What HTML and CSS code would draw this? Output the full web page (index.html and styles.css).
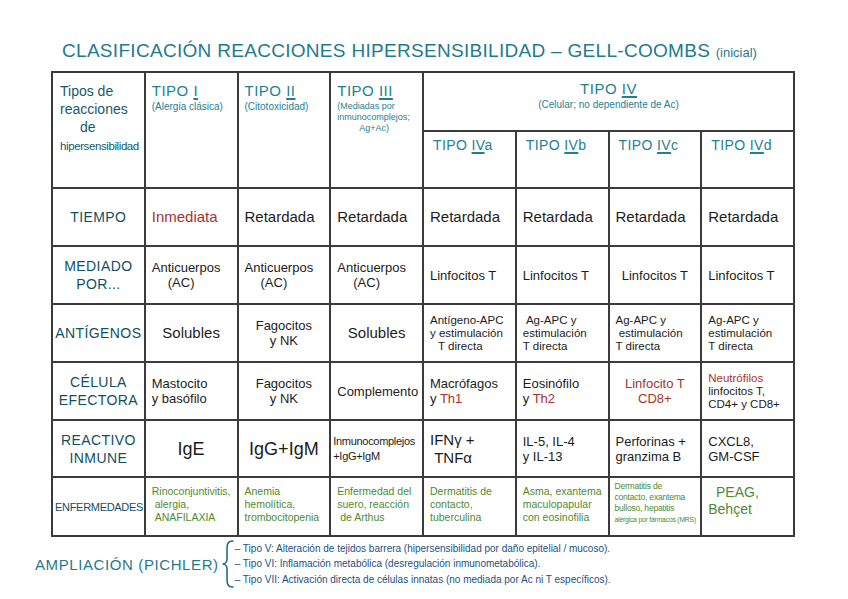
FILE: index.html
```html
<!DOCTYPE html>
<html lang="es">
<head>
<meta charset="utf-8">
<title>Clasificación reacciones hipersensibilidad</title>
<link rel="stylesheet" href="styles.css">
</head>
<body>
<div class="page">
  <h1 class="title">CLASIFICACIÓN REACCIONES HIPERSENSIBILIDAD – GELL-COOMBS <span class="title-small">(inicial)</span></h1>
  <table class="hs">
    <colgroup>
      <col><col><col><col><col><col><col><col>
    </colgroup>
    <tr class="r-h1">
      <th rowspan="2" class="corner">Tipos de<br>reacciones<br><span class="de">de</span><br><span class="long">hipersensibilidad</span></th>
      <th rowspan="2" class="th-type"><div class="tname">TIPO <span class="rn">I</span></div><div class="tsub">(Alergia clásica)</div></th>
      <th rowspan="2" class="th-type"><div class="tname">TIPO <span class="rn">II</span></div><div class="tsub">(Citotoxicidad)</div></th>
      <th rowspan="2" class="th-type"><div class="tname">TIPO <span class="rn">III</span></div><div class="tsub sm">(Mediadas por<br>inmunocomplejos;<br><span class="ind">Ag+Ac)</span></div></th>
      <th colspan="4" class="th-iv"><div class="tname">TIPO <span class="rn">IV</span></div><div class="tsub">(Celular; no dependiente de Ac)</div></th>
    </tr>
    <tr class="r-h2">
      <th class="th-sub">TIPO <span class="rn">IV</span>a</th>
      <th class="th-sub">TIPO <span class="rn">IV</span>b</th>
      <th class="th-sub">TIPO <span class="rn">IV</span>c</th>
      <th class="th-sub">TIPO <span class="rn">IV</span>d</th>
    </tr>
    <tr class="r58">
      <th class="lbl">TIEMPO</th>
      <td class="red">Inmediata</td>
      <td>Retardada</td>
      <td>Retardada</td>
      <td>Retardada</td>
      <td>Retardada</td>
      <td>Retardada</td>
      <td>Retardada</td>
    </tr>
    <tr class="r58">
      <th class="lbl">MEDIADO<br>POR...</th>
      <td class="md">Anticuerpos<br><span class="ind2">(AC)</span></td>
      <td class="md">Anticuerpos<br><span class="ind2">(AC)</span></td>
      <td class="md">Anticuerpos<br><span class="ind2">(AC)</span></td>
      <td class="md">Linfocitos T</td>
      <td class="md">Linfocitos T</td>
      <td class="md c">Linfocitos T</td>
      <td class="md">Linfocitos T</td>
    </tr>
    <tr class="r58">
      <th class="lbl">ANTÍGENOS</th>
      <td class="c">Solubles</td>
      <td class="md c">Fagocitos<br>y NK</td>
      <td class="c">Solubles</td>
      <td class="sm">Antígeno-APC<br>y estimulación<br><span class="ind3">T directa</span></td>
      <td class="sm">&nbsp;Ag-APC y<br>estimulación<br>T directa</td>
      <td class="sm">Ag-APC y<br>&nbsp;estimulación<br>T directa</td>
      <td class="sm">Ag-APC y<br>estimulación<br>T directa</td>
    </tr>
    <tr class="r58">
      <th class="lbl">CÉLULA<br>EFECTORA</th>
      <td class="md">Mastocito<br>y basófilo</td>
      <td class="md c">Fagocitos<br>y NK</td>
      <td class="md c">Complemento</td>
      <td class="md">Macrófagos<br>y <span class="red">Th1</span></td>
      <td class="md">Eosinófilo<br>y <span class="red">Th2</span></td>
      <td class="md red c">Linfocito T<br>CD8+</td>
      <td class="sm"><span class="red">Neutrófilos</span><br>linfocitos T,<br>CD4+ y CD8+</td>
    </tr>
    <tr class="r57">
      <th class="lbl">REACTIVO<br>INMUNE</th>
      <td class="lg c">IgE</td>
      <td class="lg c">IgG+IgM</td>
      <td class="md tight">Inmunocomplejos<br>+IgG+IgM</td>
      <td class="lg2">IFNγ +<br>&nbsp;TNFα</td>
      <td class="md">IL-5, IL-4<br>y IL-13</td>
      <td class="md">Perforinas +<br>granzima B</td>
      <td class="md">CXCL8,<br>GM-CSF</td>
    </tr>
    <tr class="r59">
      <th class="lbl lbl-sm">ENFERMEDADES</th>
      <td class="gr">Rinoconjuntivitis,<br>&nbsp;alergia,<br>&nbsp;ANAFILAXIA</td>
      <td class="gr">Anemia<br>hemolítica,<br>trombocitopenia</td>
      <td class="gr">Enfermedad del<br>suero, reacción<br>&nbsp;de Arthus</td>
      <td class="gr">Dermatitis de<br>contacto,<br>tuberculina</td>
      <td class="gr">Asma, exantema<br>maculopapular<br>con eosinofilia</td>
      <td class="gr xs">Dermatitis de<br>contacto, exantema<br>bulloso, hepatitis<br><span class="tiny">alérgica por fármacos (MRS)</span></td>
      <td class="gr big">&nbsp;&nbsp;PEAG,<br>Behçet</td>
    </tr>
  </table>
  <div class="footer">
    <div class="amp">AMPLIACIÓN (PICHLER)</div>
    <svg class="brace" width="14" height="50" viewBox="0 0 14 50" aria-hidden="true">
      <path d="M12 2 C6 2 6 6 6 12 L6 20 C6 23 4 25 1.5 25 C4 25 6 27 6 30 L6 38 C6 44 6 48 12 48" fill="none" stroke="#1f6f86" stroke-width="1.6" stroke-linecap="round"/>
    </svg>
    <ul class="amp-list">
      <li>– Tipo V: Alteración de tejidos barrera (hipersensibilidad por daño epitelial / mucoso).</li>
      <li>– Tipo VI: Inflamación metabólica (desregulación inmunometabólica).</li>
      <li>– Tipo VII: Activación directa de células innatas (no mediada por Ac ni T específicos).</li>
    </ul>
  </div>
</div>
</body>
</html>
```

FILE: styles.css
```css
* { box-sizing: border-box; }
html, body { margin: 0; padding: 0; background: #ffffff; }
body {
  font-family: "Liberation Sans", "DejaVu Sans", sans-serif;
  color: #1c1c1c;
  width: 848px;
  height: 599px;
  overflow: hidden;
}
.page { padding: 0; }

.title {
  margin: 37px 0 4px 62px;
  font-size: 19px;
  line-height: 28px;
  font-weight: normal;
  color: #1f7a8e;
  letter-spacing: 0.3px;
  white-space: nowrap;
}
.title-small { font-size: 13px; letter-spacing: 0; }

.hs {
  margin-left: 51px;
  width: 744px;
  border-collapse: collapse;
  table-layout: fixed;
}
.hs th, .hs td {
  border: 2px solid #3b3b3b;
  padding: 0 6px;
  font-weight: normal;
  text-align: left;
  vertical-align: middle;
  font-size: 14px;
  line-height: 16px;
  overflow: hidden;
  white-space: nowrap;
}
.r-h1 { height: 59px; }
.r-h2 { height: 57px; }
.r58 { height: 58px; }
.r57 { height: 57px; }
.r59 { height: 59px; }

.hs .corner {
  vertical-align: top;
  color: #135a6e;
  font-size: 14px;
  line-height: 18px;
  padding-top: 9px;
  padding-left: 7px;
}
.corner .de { padding-left: 20px; }
.corner .long { font-size: 11.5px; letter-spacing: -0.4px; }

.hs .th-type { vertical-align: top; padding-top: 9px; }
.tname { color: #237f94; font-size: 15px; line-height: 18px; letter-spacing: 0.5px; }
.tsub { color: #237f94; font-size: 10px; line-height: 12px; margin-top: 1px; }
.tsub.sm { font-size: 9px; line-height: 11px; }
.tsub .ind { padding-left: 22px; }
.rn { text-decoration: underline; text-decoration-thickness: 1.5px; text-underline-offset: 2px; }

.hs .th-iv { text-align: center; vertical-align: top; padding-top: 7px; }
.hs .th-sub {
  vertical-align: top;
  padding-top: 5px;
  padding-left: 9px;
  color: #237f94;
  font-size: 14px;
  letter-spacing: 0.4px;
}

.hs .lbl {
  text-align: center;
  color: #0f5064;
  font-size: 14px;
  line-height: 18px;
  letter-spacing: 0.4px;
  padding: 0 2px;
}
.hs .lbl-sm { font-size: 11px; letter-spacing: -0.3px; }

.hs td { font-size: 15px; }
.hs td.c { text-align: center; }
.hs td.md { font-size: 13px; line-height: 15px; }
.hs td.sm { font-size: 11.5px; line-height: 13px; }
.hs td.lg { font-size: 18px; }
.hs td.lg2 { font-size: 15px; line-height: 18px; }
.hs td.tight { font-size: 11px; letter-spacing: -0.3px; padding: 0 2px; }
.ind2 { padding-left: 16px; }
.ind3 { padding-left: 8px; }

.red { color: #a8322b; }
.hs td.gr { color: #4e8a30; font-size: 10.5px; line-height: 13px; vertical-align: top; padding: 7px 4px 0 6px; }
.hs td.gr.xs { font-size: 8.5px; line-height: 11px; padding: 3px 2px 0 5px; letter-spacing: -0.2px; }
.hs td.gr.xs .tiny { font-size: 6.8px; letter-spacing: -0.2px; }
.hs td.gr.big { font-size: 14px; line-height: 17px; padding-top: 6px; }

.footer {
  display: flex;
  align-items: center;
  margin: 2px 0 0 35px;
}
.amp {
  color: #1f7a8e;
  font-size: 15px;
  letter-spacing: 0.6px;
  white-space: nowrap;
}
.brace { margin-left: 2px; flex: none; }
.amp-list {
  list-style: none;
  margin: 0;
  padding: 0;
  color: #22507f;
  font-size: 10px;
  line-height: 15.5px;
  white-space: nowrap;
}
```
